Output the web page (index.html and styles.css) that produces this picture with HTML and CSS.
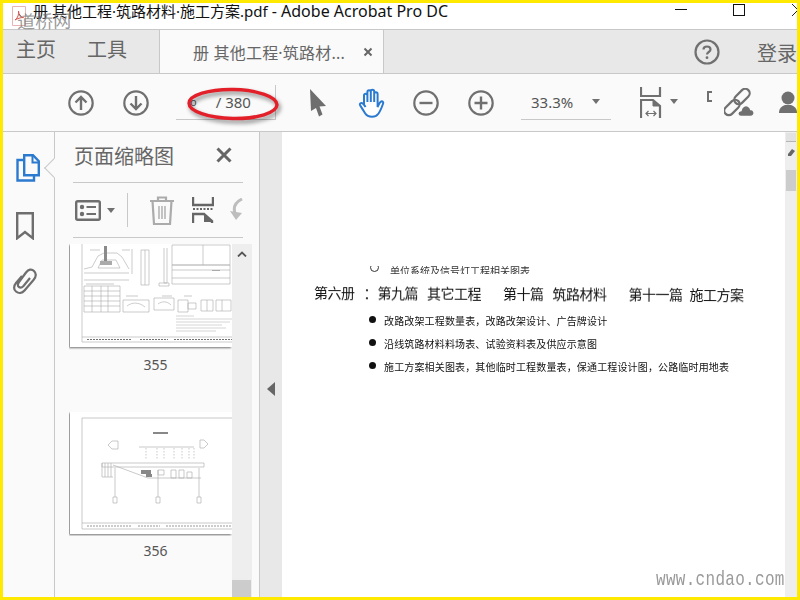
FILE: index.html
```html
<!DOCTYPE html>
<html lang="zh">
<head>
<meta charset="utf-8">
<title>Acrobat</title>
<link rel="stylesheet" href="styles.css">
</head>
<body>
<div class="frame">
  <header class="titlebar">
    <svg class="pdf-icon" width="14" height="20" viewBox="0 0 14 20"><path d="M.5.5h13v19H.5z" fill="#fff" stroke="#e8b4b4"/><path d="M3 14c3-2 4-6 3.500-9 0 3 2 6 5 6.500-3 0-6 1-8.500 2.500z" fill="none" stroke="#d9534f"/></svg>
    <span class="doc-title">册 其他工程·筑路材料·施工方案.pdf<span class="app-name"> - Adobe Acrobat Pro DC</span></span>
    <span class="win-min"></span>
    <span class="win-max"></span>
    <svg class="win-close" width="5" height="12" viewBox="0 0 5 12"><path d="M0 0l6 6-6 6" fill="none" stroke="#222"/></svg>
  </header>
  <nav class="tabbar">
    <span class="tab-link first">主页</span>
    <span class="tab-link second">工具</span>
    <div class="doc-tab">
      <span class="doc-tab-name">册 其他工程·筑路材...</span>
      <svg width="10" height="10" viewBox="0 0 10 10"><path d="M1.500 1.500l7 7M8.500 1.500l-7 7" stroke="#666" stroke-width="2"/></svg>
    </div>
    <svg class="help" width="26" height="26" viewBox="0 0 26 26"><circle cx="13" cy="13" r="11.500" fill="none" stroke="#707070" stroke-width="2.200"/><path d="M9.500 10.500c0-2 1.500-3 3.500-3s3.500 1.200 3.500 3c0 2.500-3.500 2.500-3.500 5" fill="none" stroke="#707070" stroke-width="2.200"/><circle cx="13" cy="18.700" r="1.400" fill="#707070"/></svg>
    <span class="login">登录</span>
  </nav>
  <div class="toolbar">
    <svg class="tool up" width="26" height="26" viewBox="0 0 26 26"><circle cx="13" cy="13" r="11.700" fill="none" stroke="#707070" stroke-width="2.200"/><path d="M13 20V7M7.500 12.500L13 7l5.500 5.500" fill="none" stroke="#707070" stroke-width="2.400"/></svg>
    <svg class="tool down" width="26" height="26" viewBox="0 0 26 26"><circle cx="13" cy="13" r="11.700" fill="none" stroke="#707070" stroke-width="2.200"/><path d="M13 6v13M7.500 13.500L13 19l5.500-5.500" fill="none" stroke="#707070" stroke-width="2.400"/></svg>
    <div class="page-box">
      <span class="page-cur">o</span>
      <span class="page-total">/ 380</span>
      <svg class="red-ring" width="96" height="40" viewBox="0 0 96 40"><ellipse cx="47" cy="19" rx="44" ry="14.500" fill="none" stroke="#e3202a" stroke-width="3.400" transform="rotate(1 47 19)"/></svg>
    </div>
    <svg class="tool cursor" width="18" height="28" viewBox="0 0 18 28"><path d="M1 0l16 17-6.500.5 3 8-3.500 2-3-8.500L2 22z" fill="#6e6e6e"/></svg>
    <svg class="tool hand" width="28" height="30" viewBox="0 0 28 30"><path d="M7 17V7.500a1.700 1.700 0 0 1 3.400 0V14M10.400 14V4a1.700 1.700 0 0 1 3.400 0v10M13.800 14V3.500a1.700 1.700 0 0 1 3.400 0V14M17.200 14V6a1.700 1.700 0 0 1 3.400 0v13c1-2 2-5 3.500-5.500 1.700-.5 2.500.8 2 2-1 3-3 8-5 10.500-1.500 2-3 2.800-6 2.800-3.500 0-5.500-1-7-3.500-1.500-2.500-3.500-6-5-8-1-1.500 1-3 2.500-2 1 .6 2 2 3 3.700" fill="#fff" stroke="#2a7ad0" stroke-width="2"/></svg>
    <svg class="tool minus" width="26" height="26" viewBox="0 0 26 26"><circle cx="13" cy="13" r="11.700" fill="none" stroke="#707070" stroke-width="2.200"/><path d="M6.500 13h13" stroke="#707070" stroke-width="2.400"/></svg>
    <svg class="tool plus" width="26" height="26" viewBox="0 0 26 26"><circle cx="13" cy="13" r="11.700" fill="none" stroke="#707070" stroke-width="2.200"/><path d="M6.500 13h13M13 6.500v13" stroke="#707070" stroke-width="2.400"/></svg>
    <div class="zoom-box"><span class="zoom-val">33.3%</span><span class="caret"></span></div>
    <svg class="tool fit" width="22" height="31" viewBox="0 0 22 31"><path d="M1 0v9h19V0M1 31V13h12l7 6v12" fill="none" stroke="#707070" stroke-width="2.200"/><path d="M13 13v6h7" fill="#707070" stroke="#707070"/><path d="M6 26.500h10M8.500 24l-2.500 2.500L8.500 29M13.500 24l2.500 2.500-2.500 2.500" fill="none" stroke="#707070" stroke-width="1.200"/></svg>
    <span class="caret fit-caret"></span>
    <svg class="tool frag" width="5" height="11" viewBox="0 0 5 11"><path d="M5 1H1v9h4" fill="none" stroke="#707070" stroke-width="2"/></svg>
    <svg class="tool link" width="31" height="29" viewBox="0 0 31 29"><g fill="none" stroke="#707070" stroke-width="2.200"><rect x="9" y="4" width="18" height="9" rx="4.500" transform="rotate(-45 18 8.500)"/><rect x="-1" y="15" width="18" height="9" rx="4.500" transform="rotate(-45 8 19.500)"/></g><path d="M17 28.500c-4 0-4.500-5.500 0-6 .5-3.500 4-6 7-4.500 1.500.8 2.500 2 2.800 3.500 4-.5 5 7-.3 7z" fill="#707070" stroke="#fafafa" stroke-width="1.500"/></svg>
    <svg class="tool user" width="24" height="24" viewBox="0 0 24 24"><circle cx="9" cy="7" r="6.500" fill="#707070"/><path d="M0 22c0-5 3-7 6-8h6c3 1 6 3 6 8z" fill="#707070"/></svg>
  </div>
  <main class="workspace">
    <aside class="rail">
      <svg class="rail-icon pages" width="24" height="28" viewBox="0 0 24 28"><path d="M8 6H1.500v20.500H18V21" fill="none" stroke="#2a7ad0" stroke-width="2.400"/><path d="M8.200 1.200H17l5.800 6v14H8.200z" fill="none" stroke="#2a7ad0" stroke-width="2.400"/><path d="M16.500 1v7.500h6.500" fill="none" stroke="#2a7ad0" stroke-width="2"/></svg>
      <svg class="rail-icon mark" width="18" height="28" viewBox="0 0 18 28"><path d="M1.200 1.200h15.600v25L9 20l-7.800 6.200z" fill="none" stroke="#6e6e6e" stroke-width="2.400"/></svg>
      <svg class="rail-icon clip" width="26" height="28" viewBox="0 0 26 28"><path d="M10 9L4 16c-2.500 3-2.500 6.500 0 8.500s6 2 8.500-1l9-10.500c2.500-3 3-6.500.5-9-2.500-2.500-5.500-1.500-8 1.500L7 15c-1.500 2-1.500 4 0 5s3 .5 4.500-1l6.500-8" fill="none" stroke="#6e6e6e" stroke-width="2.200"/></svg>
      <span class="notch"></span>
    </aside>
    <section class="panel">
      <div class="panel-head">
        <h2 class="panel-title">页面缩略图</h2>
        <svg width="16" height="16" viewBox="0 0 16 16"><path d="M1.500 1.500l13 13M14.500 1.500l-13 13" stroke="#666" stroke-width="3"/></svg>
      </div>
      <div class="panel-tools">
        <svg class="p-list" width="26" height="21" viewBox="0 0 26 21"><rect x="1.200" y="1.200" width="23.600" height="18.600" rx="1.500" fill="none" stroke="#6e6e6e" stroke-width="2.400"/><circle cx="7" cy="7" r="2.200" fill="#6e6e6e"/><circle cx="7" cy="14" r="2.200" fill="#6e6e6e"/><path d="M11.500 7H21M11.500 14H21" stroke="#6e6e6e" stroke-width="2.200"/></svg>
        <span class="caret p-caret"></span>
        <span class="p-sep"></span>
        <svg class="p-trash" width="26" height="29" viewBox="0 0 26 29"><path d="M1 5h24M9 5V1.500h8V5M3.500 5l1.500 23h16l1.500-23" fill="none" stroke="#ababab" stroke-width="2.200"/><path d="M10 10v13M13 10v13M16 10v13" stroke="#ababab" stroke-width="1.400"/></svg>
        <svg class="p-cut" width="22" height="28" viewBox="0 0 22 28"><path d="M1 1v8h20V1M1 27V18h11l8 7v2" fill="none" stroke="#666" stroke-width="2.400"/><path d="M12 18v8h8z" fill="#666"/><path d="M1 13h20" stroke="#666" stroke-width="2" stroke-dasharray="2 1.500"/></svg>
        <svg class="p-rot" width="20" height="24" viewBox="0 0 20 24"><path d="M12 1C6 4 3 9 5 15" fill="none" stroke="#bdbdbd" stroke-width="3"/><path d="M0 13l6 9 6-7z" fill="#bdbdbd"/></svg>
      </div>
      <div class="thumbs-wrap">
        <div class="thumbs">
          <figure class="thumb first-thumb">
            <svg class="sheet" width="162" height="103" viewBox="0 0 162 103">
              <rect width="162" height="103" fill="#fff"/>
              <g class="ink" fill="none" stroke="#8f8f8f" stroke-width=".6">
                <path d="M12 0v98h150M12 93h150"/>
                <path d="M14 36h45M14 29h45M14 25l8-2 6-11 6-3h13l5 4 7 12"/>
                <path d="M28 24l4-8h14l4 8zM20 6h10M52 6h8M62 5v25"/>
                <path d="M71 6h8v35h-8zM75 6v35M94 4v35h3V4M89 39h10v3H89z"/>
                <path d="M102 1h58v20h-58zM102 21h58v19h-58zM102 26h58M102 34h58M133 1v20"/>
                <path d="M14 42h36v26H14zM14 47h36M14 52h36M14 57h36M14 62h36M22 42v26M31 42v26M38 42v26"/>
                <path d="M53 56h26v12H53zM57 62c5-4 12-4 18 1M84 54h20v12H84zM88 60c4-3 9-3 13 1M108 56h10v12h-10zM118 59h8v6h-8zM131 56h12v11h-12zM137 56v11M146 56h15v11h-15zM152 56v11"/>
              </g>
              <path d="M34 2h3v17h-3z" fill="#8a8a8a"/>
              <path d="M30 17h12v4H30zM142 26h8v1h-8z" fill="#aaa"/>
              <g class="ink" stroke="#b0b0b0" stroke-width=".7">
                <path d="M106 72h18M106 75h56M106 78h54M106 81h46M106 84h50M106 87h40"/>
                <path d="M16 40h28M56 52h12M92 52h10M114 52h8" stroke="#999"/>
              </g>
              <g class="ink" stroke="#444" stroke-width="1" stroke-dasharray="2 1">
                <path d="M17 95.500h45M70 95.500h28M104 95.500h58"/>
              </g>
            </svg>
          </figure>
          <figcaption class="thumb-num">355</figcaption>
          <figure class="thumb">
            <svg class="sheet" width="162" height="122" viewBox="0 0 162 122">
              <rect width="162" height="122" fill="#fff"/>
              <g class="ink" fill="none" stroke="#9a9a9a" stroke-width=".7">
                <path d="M12 117V6h150M12 117h150M12 111h150"/>
                <path d="M38 33l4-4h6v8h-6zM138 32l-4-4h-4v8h4z"/>
                <path d="M69 35h55"/>
                <path d="M76 36v12M87 36v12M94 36v12M104 36v12M112 36v12M119 36v12M124 36v12" stroke-dasharray="1.500 1.500"/>
                <path d="M32 51h102v4H32zM32 51v14h11M43 53l35 13M78 66h53"/>
                <path d="M35 51v14M38 51v14M41 51v14M45 56v29M88 58v27M129 56v29"/>
                <path d="M43 85h4v6h-4zM86 85h4v6h-4zM127 85h4v6h-4zM101 58h5v8h-5zM109 58h5v8h-5zM117 60h5v6h-5zM88 58h6v5h-6z"/>
              </g>
              <path d="M71 58h10v4H71zM76 62h6v3h-6zM83 20h15v2H83z" fill="#888"/>
              <g class="ink" stroke="#777" stroke-width="1" stroke-dasharray="2 1">
                <path d="M17 114h45M68 114h22M96 114h66"/>
              </g>
            </svg>
          </figure>
          <figcaption class="thumb-num">356</figcaption>
        </div>
        <div class="thumbs-bar">
          <svg width="10" height="6" viewBox="0 0 10 6"><path d="M1 5.500l4-4 4 4" fill="none" stroke="#555" stroke-width="1.800"/></svg>
          <span class="thumbs-bar-grip"></span>
        </div>
      </div>
    </section>
    <div class="gutter"><span class="gutter-arrow"></span></div>
    <article class="page">
      <div class="cut-line"><span class="hollow"></span><span>单位系统及信号灯工程相关图表</span></div>
      <p class="heading"><span>第六册</span><span class="colon">：</span><span class="h1">第九篇</span><span class="h2">其它工程</span><span class="h3">第十篇</span><span class="h2">筑路材料</span><span class="h3">第十一篇</span><span class="h4">施工方案</span></p>
      <ul class="items">
        <li>改路改架工程数量表，改路改架设计、广告牌设计</li>
        <li>沿线筑路材料料场表、试验资料表及供应示意图</li>
        <li>施工方案相关图表，其他临时工程数量表，保通工程设计图，公路临时用地表</li>
      </ul>
      <span class="mark-cndao">www.cndao.com</span>
    </article>
    <div class="vbar">
      <span class="vbar-btn"></span>
      <svg class="vbar-pen" width="7" height="8" viewBox="0 0 7 8"><path d="M0 5l4-5 3 2-4 5H0z" fill="#666"/></svg>
      <span class="vbar-grip"></span>
    </div>
  </main>
  <span class="watermark">道桥网</span>
</div>
</body>
</html>
```
FILE: styles.css
```css
* { box-sizing: border-box; }
html, body { margin: 0; padding: 0; }
body { width: 800px; height: 600px; overflow: hidden; font-family: "Noto Sans", "Noto Sans CJK SC", sans-serif; background: #fff; }
.frame { position: relative; width: 800px; height: 600px; border: 3px solid #ffe900; display: flex; flex-direction: column; overflow: hidden; background: #fff; }

.titlebar { height: 27px; flex: none; display: flex; align-items: flex-start; background: #fff; border-bottom: 1px solid #c8c8c8; position: relative; }
.pdf-icon { margin: 3px 0 0 9px; flex: none; }
.doc-title { margin-left: 7px; font-size: 15px; line-height: 17px; color: #111; white-space: nowrap; }
.app-name { font-size: 16px; white-space: pre; }
.win-min { width: 12px; height: 1px; background: #111; margin: 6px 0 0 auto; flex: none; }
.win-max { width: 12px; height: 12px; border: 1px solid #111; margin: 1px 0 0 46px; flex: none; }
.win-close { margin: 1px 0 0 47px; flex: none; }

.tabbar { height: 44px; flex: none; display: flex; align-items: center; background: #e8e8e8; border-bottom: 1px solid #c8c8c8; overflow: hidden; font-family: "Noto Sans", "Noto Sans CJK SC", sans-serif; }
.tab-link { font-size: 20px; color: #666; line-height: 26px; margin-bottom: 4px; flex: none; }
.tab-link.first { margin-left: 13px; }
.tab-link.second { margin-left: 31px; }
.doc-tab { margin-left: 32px; width: 225px; height: 44px; flex: none; align-self: flex-start; background: #fafafa; border-left: 1px solid #c8c8c8; border-right: 1px solid #c8c8c8; display: flex; align-items: center; padding-left: 33px; }
.doc-tab-name { font-size: 16px; letter-spacing: .2px; color: #666; width: 170px; white-space: nowrap; }
.help { margin-left: 310px; flex: none; }
.login { margin-left: 37px; font-size: 20px; color: #666; white-space: nowrap; flex: none; position: relative; top: 1px; }

.toolbar { height: 58px; flex: none; display: flex; align-items: center; background: #fafafa; border-bottom: 1px solid #c8c8c8; overflow: hidden; padding-left: 65px; }
.tool { flex: none; }
.down { margin-left: 29px; }
.page-box { position: relative; margin-left: 27px; width: 100px; height: 35px; margin-top: -1px; flex: none; border-bottom: 1px solid #c8c8c8; border-right: 1px solid #c8c8c8; display: flex; align-items: center; font-size: 15px; color: #555; }
.page-cur { margin-left: 14px; font-size: 11px; }
.page-total { margin-left: 19px; }
.red-ring { position: absolute; left: 10px; top: 0; filter: drop-shadow(2px 3px 2px rgba(0,0,0,.45)); }
.cursor { margin-left: 33px; }
.hand { margin-left: 30px; }
.minus { margin-left: 28px; }
.plus { margin-left: 29px; }
.zoom-box { margin-left: 27px; width: 90px; height: 35px; margin-top: -1px; flex: none; border-bottom: 1px solid #c8c8c8; display: flex; align-items: center; font-size: 15px; color: #555; padding-left: 10px; }
.zoom-val { width: 61px; }
.caret { width: 0; height: 0; border-left: 4.500px solid transparent; border-right: 4.500px solid transparent; border-top: 5px solid #707070; flex: none; }
.fit { margin-left: 29px; }
.fit-caret { margin-left: 8px; margin-top: -2px; }
.frag { margin-left: 29px; margin-top: -12px; }
.link { margin-left: 12px; }
.user { margin-left: 24px; }

.workspace { flex: 1; min-height: 0; display: flex; }
.rail { width: 52px; flex: none; background: #fafafa; border-right: 1px solid #c8c8c8; display: flex; flex-direction: column; align-items: center; position: relative; padding-top: 22px; }
.rail-icon { flex: none; }
.pages { margin-left: -1px; }
.mark { margin-top: 30px; margin-left: -8px; }
.clip { margin-top: 27px; margin-left: -8px; }
.notch { position: absolute; right: -1px; top: 29px; width: 14px; height: 14px; background: #fafafa; border-left: 1px solid #c8c8c8; border-bottom: 1px solid #c8c8c8; transform: translateX(6px) rotate(45deg); }
.panel { width: 205px; flex: none; background: #fafafa; border-right: 1px solid #c8c8c8; display: flex; flex-direction: column; }
.panel-head { height: 51px; margin: 0 16px 0 18px; flex: none; display: flex; align-items: center; justify-content: space-between; border-bottom: 1px solid #c8c8c8; padding: 0 11px 4px 1px; }
.panel-title { margin: 0; font-size: 20px; font-weight: 400; color: #666; font-family: "Noto Sans CJK SC", sans-serif; }
.panel-tools { height: 55px; margin: 0 16px 0 18px; flex: none; display: flex; align-items: center; overflow: hidden; border-bottom: 1px solid #c8c8c8; padding-left: 2px; }
.p-list, .p-trash, .p-cut, .p-rot { flex: none; }
.p-caret { margin-left: 6px; }
.p-sep { width: 1px; height: 34px; background: #c8c8c8; margin-left: 12px; flex: none; }
.p-trash { margin-left: 21px; }
.p-cut { margin-left: 17px; }
.p-rot { margin-left: 16px; }
.thumbs-wrap { flex: 1; min-height: 0; display: flex; margin-top: 6px; overflow: hidden; }
.thumbs { width: 177px; flex: none; padding-left: 14px; overflow: hidden; }
.thumb { margin: 0; width: 163px; overflow: hidden; padding-bottom: 2px; }
.sheet { display: block; box-shadow: -1px 1px 2px rgba(0,0,0,.55); margin-left: 1px; filter: blur(.35px); }
.ink { opacity: .75; }
.first-thumb { height: 106px; }
.thumb-num { text-align: center; font-size: 14px; line-height: 20px; color: #555; margin: 5px 0 37px; padding-left: 10px; }
.thumbs-bar { width: 20px; flex: none; background: #eeeeee; display: flex; flex-direction: column; align-items: center; padding-top: 7px; }
.thumbs-bar-grip { margin-top: auto; width: 19px; height: 17px; background: #cccccc; align-self: flex-start; }
.gutter { width: 22px; flex: none; background: #e8e8e8; display: flex; align-items: center; padding-left: 7px; }
.gutter-arrow { width: 0; height: 0; border-top: 7px solid transparent; border-bottom: 7px solid transparent; border-right: 8px solid #666; margin-top: 49px; }
.page { flex: 1; min-width: 0; background: #fff; position: relative; overflow: hidden; font-family: "Noto Sans CJK SC", sans-serif; color: #111; padding: 134px 0 0 32px; }
.page > * { filter: blur(.3px); }
.cut-line { height: 8px; overflow: hidden; margin-left: 56px; display: flex; font-size: 10px; line-height: 9px; color: #333; }
.cut-line span:last-child { margin-left: 11px; }
.hollow { width: 9px; height: 9px; border: 1px solid #333; border-radius: 50%; margin-top: -3px; flex: none; }
.heading { margin: 8px 0 0; font-size: 14px; line-height: 20px; letter-spacing: -.5px; white-space: nowrap; transform: rotate(.3deg); transform-origin: left center; color: #111; display: flex; }
.colon { width: 9px; margin-left: 9px; }
.h1 { margin-left: 5px; }
.h2 { margin-left: 9px; }
.h3 { margin-left: 22px; }
.h4 { margin-left: 7px; }
.items { list-style: none; margin: 7px 0 0; padding: 0 0 0 70px; font-size: 10px; letter-spacing: .15px; white-space: nowrap; }
.items li { position: relative; height: 23px; line-height: 23px; }
.items li::before { content: ""; position: absolute; left: -15px; top: 7px; width: 7px; height: 7px; border-radius: 50%; background: #111; }
.mark-cndao { position: absolute; left: 374px; bottom: 7px; font-family: "Liberation Mono", monospace; font-size: 16px; letter-spacing: .3px; line-height: 20px; color: #9a9a9a; transform: scaleY(1.3); }
.vbar { width: 12px; flex: none; background: #eeeeee; display: flex; flex-direction: column; align-items: center; }
.vbar-btn { width: 10px; height: 9px; margin-top: 1px; background: #e2e2e2; border-bottom: 1px solid #b5b5b5; }
.vbar-pen { margin-top: 7px; }
.vbar-grip { width: 10px; height: 21px; margin-top: 13px; background: #cccccc; }
.watermark { position: absolute; left: 14px; top: 7px; font-family: "Noto Sans CJK SC", sans-serif; font-size: 18px; line-height: 20px; color: rgba(110,110,110,.7); transform: rotate(-1deg); pointer-events: none; }
```
